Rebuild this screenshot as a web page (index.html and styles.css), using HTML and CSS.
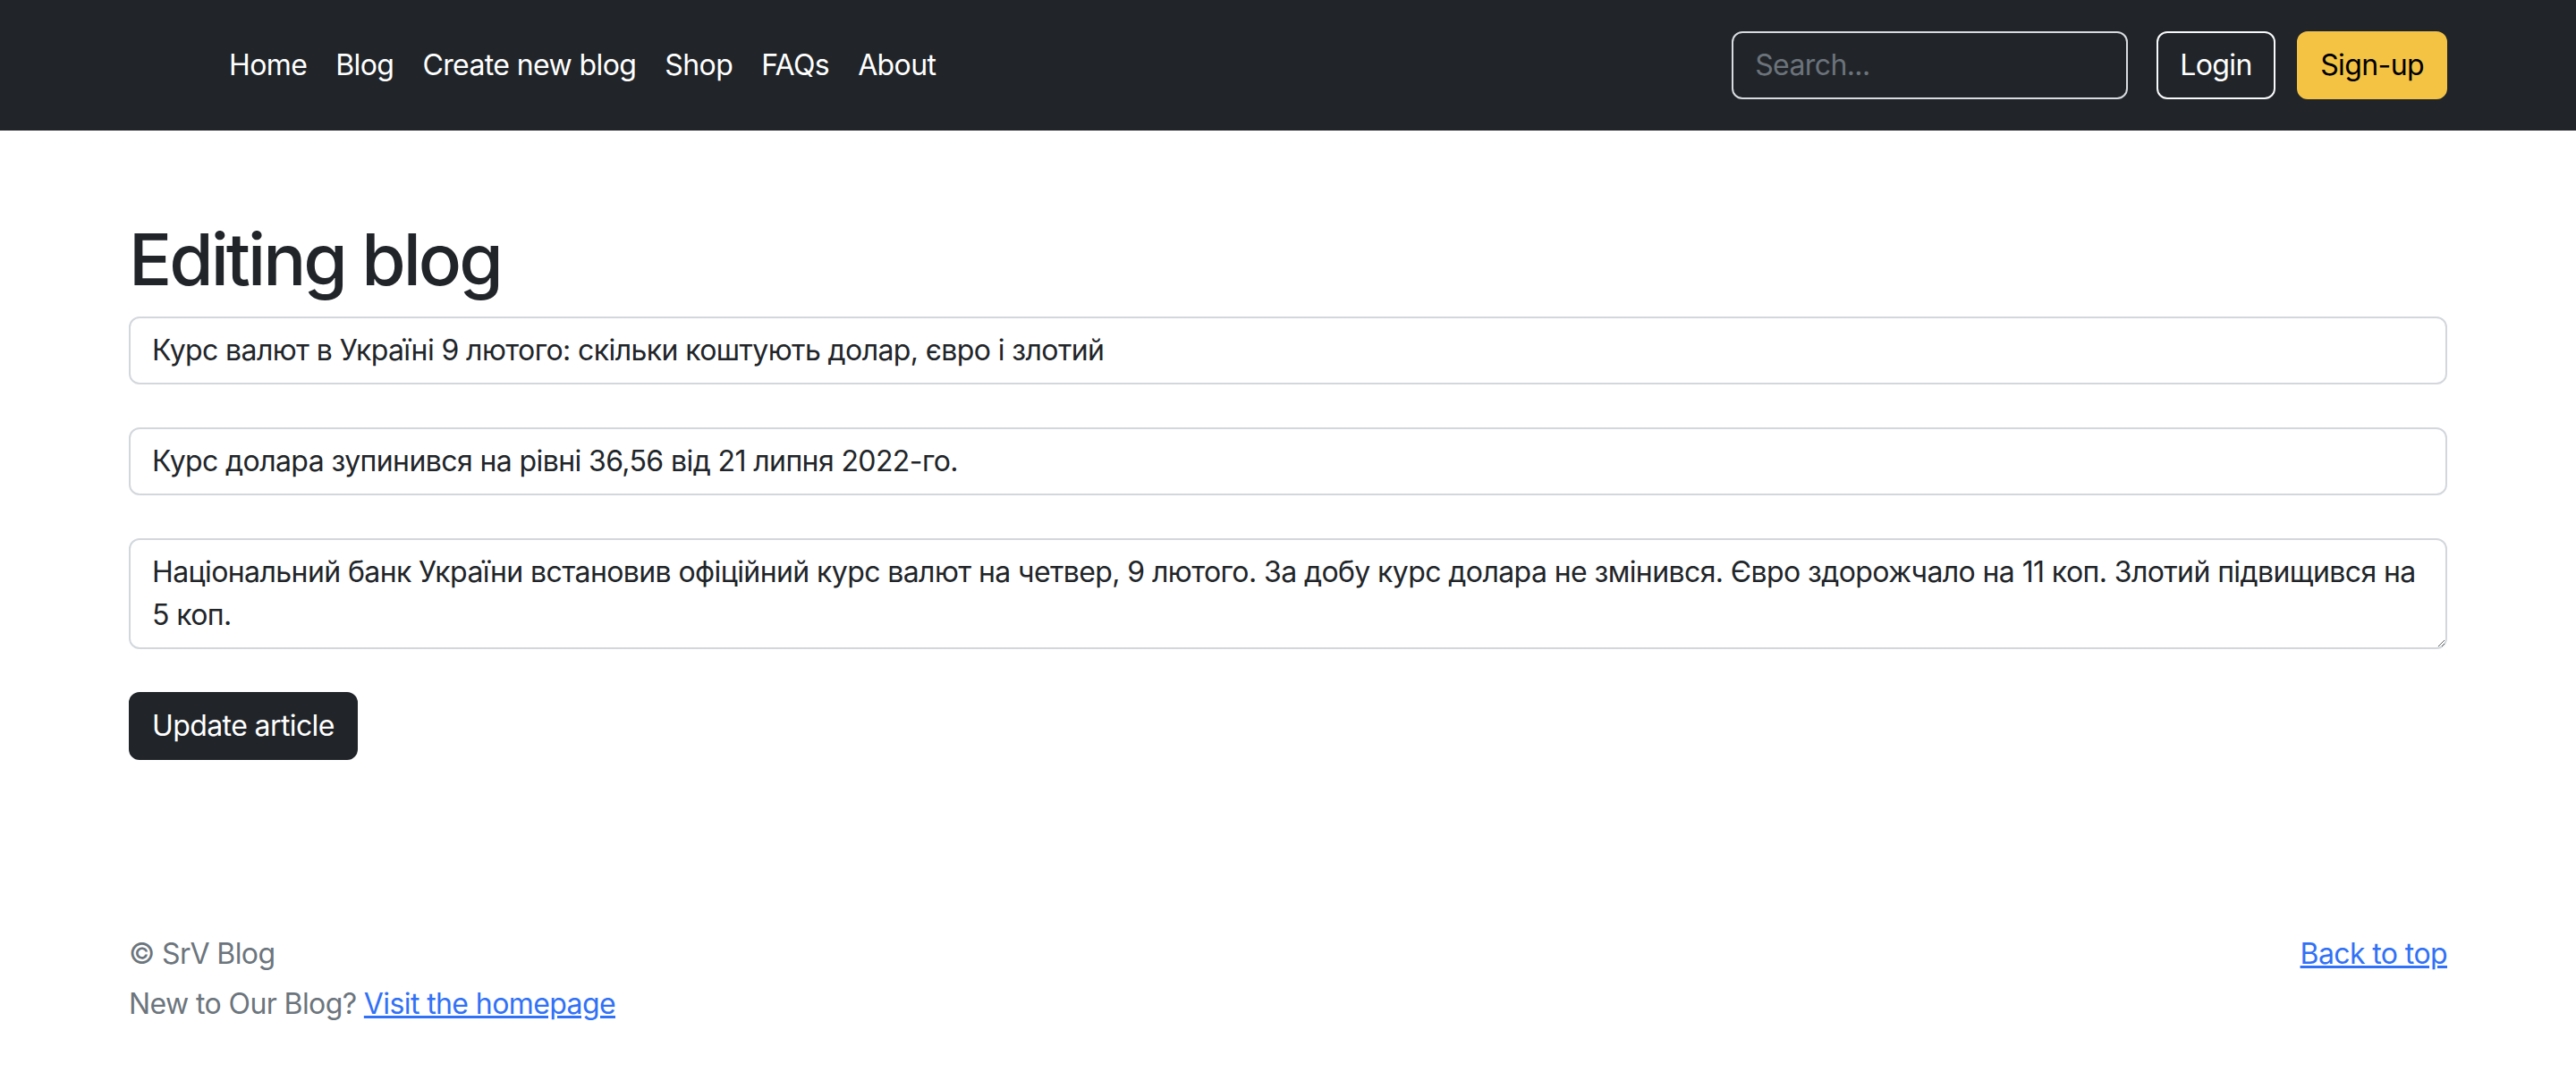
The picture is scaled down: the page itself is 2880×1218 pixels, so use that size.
FILE: index.html
```html
<!DOCTYPE html>
<html lang="uk">
<head>
<meta charset="utf-8">
<title>Editing blog</title>
<link rel="stylesheet" href="styles.css">
</head>
<body>
<header class="site-header">
  <div class="container header-row">
    <a class="brand" href="/"><span class="brand-logo"></span></a>
    <ul class="nav-links">
      <li><a class="nav-link" href="#">Home</a></li>
      <li><a class="nav-link" href="#">Blog</a></li>
      <li><a class="nav-link" href="#">Create new blog</a></li>
      <li><a class="nav-link" href="#">Shop</a></li>
      <li><a class="nav-link" href="#">FAQs</a></li>
      <li><a class="nav-link" href="#">About</a></li>
    </ul>
    <form class="search-form">
      <input class="search-input" type="search" placeholder="Search...">
    </form>
    <div class="auth">
      <button class="btn btn-outline-light" type="button">Login</button>
      <button class="btn btn-warning" type="button">Sign-up</button>
    </div>
  </div>
</header>

<main class="container main">
  <h1 class="page-title">Editing blog</h1>
  <form class="edit-form">
    <input class="form-control" type="text" value="Курс валют в Україні 9 лютого: скільки коштують долар, євро і злотий">
    <input class="form-control" type="text" value="Курс долара зупинився на рівні 36,56 від 21 липня 2022-го.">
    <textarea class="form-control" rows="2">Національний банк України встановив офіційний курс валют на четвер, 9 лютого. За добу курс долара не змінився. Євро здорожчало на 11 коп. Злотий підвищився на 5 коп.</textarea>
    <button class="btn btn-dark" type="submit">Update article</button>
  </form>
</main>

<footer class="site-footer">
  <div class="container">
    <div class="footer-top">
      <p class="footer-line">© SrV Blog</p>
      <p class="footer-line"><a href="#">Back to top</a></p>
    </div>
    <p class="footer-line last">New to Our Blog? <a href="#">Visit the homepage</a></p>
  </div>
</footer>
</body>
</html>
```
FILE: styles.css
```css
* { box-sizing: border-box; }

html, body {
  margin: 0;
  padding: 0;
}

body {
  font-family: Inter, "Noto Sans", "Liberation Sans", sans-serif;
  font-size: 32px;
  line-height: 1.5;
  letter-spacing: -0.6px;
  color: #212529;
  background: #fff;
}

.container {
  width: 2640px;
  margin: 0 auto;
  padding: 0 24px;
}

/* header */
.site-header {
  background: #212529;
  padding: 33px 0;
}

.header-row {
  display: flex;
  align-items: center;
}

.brand {
  display: flex;
  align-items: center;
  margin-right: 16px;
}

.brand-logo {
  display: block;
  width: 80px;
  height: 64px;
}

.nav-links {
  display: flex;
  list-style: none;
  margin: 0 auto 0 0;
  padding: 0;
}

.nav-link {
  display: block;
  padding: 16px 16px;
  color: #fff;
  text-decoration: none;
  line-height: 48px;
}

.search-form {
  margin-right: 32px;
}

.search-input {
  display: block;
  width: 443px;
  padding: 12px 24px;
  font: inherit;
  letter-spacing: inherit;
  line-height: 48px;
  color: #fff;
  background: #212529;
  border: 2px solid #d8dbe0;
  border-radius: 12px;
  outline: none;
  -webkit-appearance: none;
  appearance: none;
}

.search-input::placeholder {
  color: #6c737b;
}

.btn {
  display: inline-block;
  padding: 12px 24px;
  font: inherit;
  letter-spacing: inherit;
  line-height: 48px;
  border: 2px solid transparent;
  border-radius: 12px;
  cursor: pointer;
  vertical-align: middle;
}

.btn-outline-light {
  color: #fff;
  background: transparent;
  border-color: #f8f9fa;
  margin-right: 16px;
}

.btn-warning {
  color: #000;
  background: #f4c344;
  border-color: #f4c344;
}

.btn-dark {
  color: #fff;
  background: #212529;
  border-color: #212529;
}

/* main */
.main {
  padding-top: 96px;
}

.page-title {
  margin: 0 0 16px;
  font-size: 80px;
  font-weight: 500;
  line-height: 1.2;
  letter-spacing: -3px;
}

.form-control {
  display: block;
  width: 100%;
  margin: 0 0 48px;
  padding: 12px 24px;
  font: inherit;
  letter-spacing: inherit;
  line-height: 48px;
  color: #212529;
  background: #fff;
  border: 2px solid #d3d7dc;
  border-radius: 12px;
  outline: none;
}

textarea.form-control {
  resize: vertical;
}

/* footer */
.site-footer {
  padding: 193px 0 96px;
  color: #6c757d;
}

.footer-top {
  display: flex;
  justify-content: space-between;
}

.footer-line {
  margin: 0 0 8px;
}

.footer-line.last {
  margin-bottom: 0;
}

.site-footer a {
  color: #3171f6;
}
```
